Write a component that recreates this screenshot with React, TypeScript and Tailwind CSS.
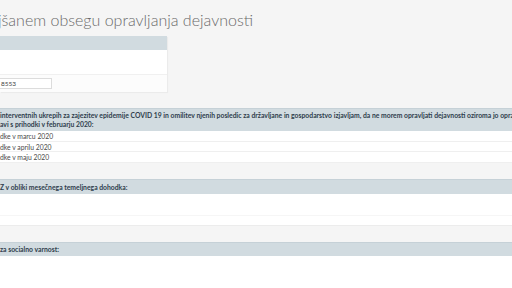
import React from 'react';

const font = { fontFamily: 'Lato, "Open Sans", sans-serif' };

const SectionHeader: React.FC<{ lines: string[]; className?: string }> = ({ lines, className }) => (
  <div className={`bg-[#d1dbe0] border-t border-[#c6d1d7] text-[#2f3d4c] font-bold text-[6.8px] leading-[9px] whitespace-nowrap overflow-hidden ${className ?? ''}`}>
    {lines.map((l) => (
      <div key={l}>{l}</div>
    ))}
  </div>
);

const Row: React.FC<{ text?: string }> = ({ text }) => (
  <div className="h-[10.6px] bg-white border-b border-[#efefef] text-[#4a4a4a] text-[6.8px] leading-[10px] whitespace-nowrap">
    {text}
  </div>
);

export default function App() {
  return (
    <div className="w-[512px] h-[288px] overflow-hidden bg-[#f5f5f5]" style={font}>
      {/* Page title (left part cut off) */}
      <h1 className="h-[36px] pt-[9px] -ml-[2px] text-[16px] leading-[22px] font-light text-[#6a6a6a] whitespace-nowrap">
        jšanem obsegu opravljanja dejavnosti
      </h1>

      {/* Applicant panel */}
      <div className="w-[167px] bg-white shadow-[1px_1px_1px_rgba(0,0,0,0.04)]">
        <div className="h-[14px] bg-[#d1dbe0]" />
        <div className="h-[25px] bg-white border-b border-[#f0f0f0]" />
        <div className="h-[17px] bg-[#fcfcfc] flex items-center">
          <div className="w-[52px] h-[11px] bg-white border border-l-0 border-[#dcdcdc] text-[6.5px] leading-[9px] text-[#444] pl-[1px]">
            8553
          </div>
        </div>
      </div>

      {/* COVID measures section */}
      <div className="mt-[16px]">
        <SectionHeader
          className="h-[23px] pt-[2px]"
          lines={[
            ' interventnih ukrepih za zajezitev epidemije COVID 19 in omilitev njenih posledic za državljane in gospodarstvo izjavljam, da ne morem opravljati dejavnosti oziroma jo opravljam',
            'avi s prihodki v februarju 2020:',
          ]}
        />
        <Row text="dke v marcu 2020" />
        <Row text="dke v aprilu 2020" />
        <Row text="dke v maju 2020" />
      </div>

      {/* Basic income section */}
      <div className="mt-[16px]">
        <SectionHeader className="h-[15px] pt-[3px]" lines={['Z v obliki mesečnega temeljnega dohodka:']} />
        <div className="h-[22px] bg-white border-b border-[#f6f6f6]" />
        <div className="h-[10px] bg-white border-b border-[#ececec]" />
      </div>

      {/* Social security section */}
      <div className="mt-[16px]">
        <SectionHeader className="h-[14px] pt-[2px]" lines={['za socialno varnost:']} />
        <div className="h-[40px] bg-white" />
      </div>
    </div>
  );
}
